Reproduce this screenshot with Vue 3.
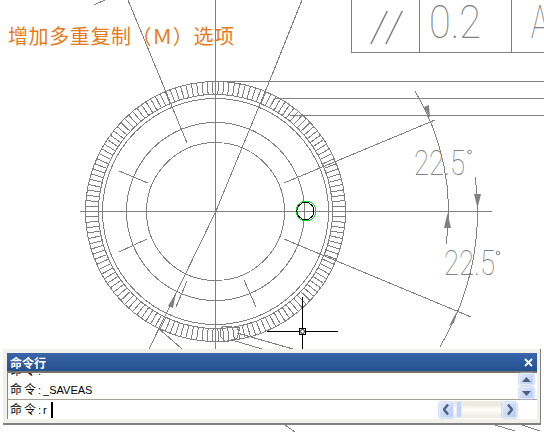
<template>
  <div class="screen">
    <!-- CAD drawing -->
    <svg class="drawing" width="544" height="432" viewBox="0 0 544 432">
      <g fill="none" stroke="#808080" stroke-width="1" shape-rendering="crispEdges">
        <circle v-for="r in rings" :key="r" :cx="cx" :cy="cy" :r="r" />
        <line v-for="(t, i) in teeth" :key="i" :x1="t.x1" :y1="t.y1" :x2="t.x2" :y2="t.y2" />
        <polyline v-for="(p, i) in polylines" :key="'p' + i" :points="p" />
        <path :d="arcInner" />
        <path :d="arcOuter" />
      </g>
      <g fill="#808080" stroke="none">
        <polygon v-for="(a, i) in arrows" :key="'a' + i" :points="a" />
      </g>

      <!-- dimension texts -->
      <g class="cad-text">
        <text transform="translate(369 41)" font-size="42" textLength="36" lengthAdjust="spacingAndGlyphs">//</text>
        <text transform="translate(429 38)" font-size="47" textLength="52" lengthAdjust="spacingAndGlyphs">0.2</text>
        <text transform="translate(531 38)" font-size="47" textLength="18" lengthAdjust="spacingAndGlyphs">A</text>
        <text transform="translate(414 175)" font-size="35" textLength="51" lengthAdjust="spacingAndGlyphs">22.5</text>
        <text transform="translate(444 275)" font-size="35" textLength="51" lengthAdjust="spacingAndGlyphs">22.5</text>
      </g>
      <g fill="none" stroke="#808080">
        <circle cx="469.5" cy="152" r="1.8" />
        <circle cx="498" cy="253" r="1.8" />
      </g>

      <!-- selected grip circle -->
      <g fill="none" shape-rendering="crispEdges">
        <circle cx="306" cy="211" r="10" stroke="#00e020" />
        <circle cx="305.5" cy="211" r="8.6" stroke="#000" />
      </g>

      <!-- crosshair -->
      <g stroke="#000" stroke-width="1" shape-rendering="crispEdges">
        <line x1="302.5" y1="297" x2="302.5" y2="349" />
        <line x1="267" y1="331.5" x2="338" y2="331.5" />
        <rect x="299.5" y="328.5" width="6" height="6" fill="#fff" />
      </g>
      <circle cx="302.5" cy="331.5" r="2" fill="none" stroke="#000" stroke-width="0.8" />
    </svg>

    <div class="headline">增加多重复制（Ｍ）选项</div>

    <!-- command line window -->
    <div class="cmd-window">
      <div class="cmd-title">
        <span>命令行</span>
        <svg class="close" width="9" height="9" viewBox="0 0 9 9">
          <path d="M1 1 L8 8 M8 1 L1 8" stroke="#fff" stroke-width="1.8" fill="none" />
        </svg>
      </div>
      <div class="cmd-history">
        <div class="history-text">
          <div class="line"><span class="prompt">命令</span><span class="colon">:</span></div>
          <div class="line"><span class="prompt">命令</span><span class="colon">:</span>_SAVEAS</div>
        </div>
        <div class="vscroll">
          <button class="sbtn vbtn">
            <svg width="9" height="5" viewBox="0 0 9 5"><path d="M4.5 0 L9 5 H0 Z" fill="#4d6185" /></svg>
          </button>
          <button class="sbtn vbtn">
            <svg width="9" height="5" viewBox="0 0 9 5"><path d="M0 0 H9 L4.5 5 Z" fill="#4d6185" /></svg>
          </button>
        </div>
      </div>
      <div class="cmd-input">
        <div class="line input-line"><span class="prompt">命令</span><span class="colon">:</span>r<span class="caret"></span></div>
        <div class="hscroll">
          <button class="sbtn hbtn">
            <svg width="7" height="11" viewBox="0 0 7 11"><path d="M5 0.5 L1 5.5 L5 10.5" stroke="#4d6185" stroke-width="2.4" fill="none" /></svg>
          </button>
          <div class="track">
            <div class="thumb"></div>
          </div>
          <button class="sbtn hbtn">
            <svg width="7" height="11" viewBox="0 0 7 11"><path d="M2 0.5 L6 5.5 L2 10.5" stroke="#4d6185" stroke-width="2.4" fill="none" /></svg>
          </button>
        </div>
      </div>
    </div>
  </div>
</template>

<script setup>
const cx = 215.5
const cy = 211.5
const rings = [130, 117, 113, 89, 69]

// hatch teeth around the outer ring
const teeth = []
for (let i = 0; i < 150; i++) {
  const a = (i * 2 * Math.PI) / 150
  teeth.push({
    x1: cx + 117 * Math.cos(a),
    y1: cy + 117 * Math.sin(a),
    x2: cx + 130 * Math.cos(a),
    y2: cy + 130 * Math.sin(a),
  })
}

const polylines = [
  '215.5,0 215.5,349',
  '80,211.5 492,211.5',
  // table
  '351.5,0 351.5,52.5 544,52.5',
  '419.5,0 419.5,52.5',
  '511.5,0 511.5,52.5',
  // extension lines
  '215,81.5 544,81.5',
  '275,98.5 544,98.5',
  '290,115.5 544,115.5',
  // radial lines
  '128,0 187,143',
  '302,0 272,75 216,211 149,349',
  '284,183 435,120',
  '284,239 471,317',
  '119,171 148,183',
  '119,252 147,239',
  '244,280 256,307',
  '187,281 176,307',
  '94,5 105,0',
  // lines at the bottom of the ring
  '157,327 182,349',
  '237,333 293,349',
  '232,340 262,349',
  '224,326 240,328 237,338 226,342 220,336 221,328 224,326',
  '285,425 295,432',
  '495,425 515,431',
  '522,425 540,431',
]

const arcPath = (r, a0, a1) => {
  const p = (a) => `${cx + r * Math.cos(a * Math.PI / 180)} ${cy + r * Math.sin(a * Math.PI / 180)}`
  return `M${p(a0)} A${r} ${r} 0 0 1 ${p(a1)}`
}
const arcInner = arcPath(233, -31, 8)
const arcOuter = arcPath(262, -7.5, 31)

const arrows = [
  '444,228 451,228 447.5,213',
  '474,194 481,194 477.5,208',
  '424,107 429,105 430,118',
  '449,326 454,323 457,311',
  '168,306 173,308 176,293',
]
</script>

<style scoped>
.screen {
  position: relative;
  width: 544px;
  height: 432px;
  overflow: hidden;
  background: #fff;
}

.drawing {
  display: block;
}

.cad-text text {
  font-family: Roboto, "Liberation Sans", sans-serif;
  font-weight: 100;
  fill: #808080;
}

.headline {
  position: absolute;
  left: 8px;
  top: 21px;
  font-family: "Noto Sans CJK SC", sans-serif;
  font-size: 20px;
  letter-spacing: 0.6px;
  line-height: 29px;
  color: #e87a1a;
  white-space: nowrap;
}

.cmd-window {
  position: absolute;
  left: 3px;
  top: 349px;
  width: 538px;
  height: 76px;
  box-sizing: border-box;
  padding: 4px 3px 5px 4px;
  display: flex;
  flex-direction: column;
  background: #f1f0ea;
  border-right: 1px solid #808080;
  border-bottom: 2px solid #808080;
  font-family: "Liberation Sans", "Noto Sans CJK SC", sans-serif;
  font-size: 11px;
  color: #000;
}

.cmd-title {
  height: 18px;
  flex: none;
  display: flex;
  align-items: center;
  justify-content: space-between;
  padding: 0 4px 0 3px;
  background: linear-gradient(#3a66aa, #24508f);
  color: #fff;
  font-family: "Noto Sans CJK SC", sans-serif;
  font-size: 12px;
  font-weight: 700;
}

.close {
  display: block;
}

.cmd-history {
  height: 29px;
  flex: none;
  display: flex;
  justify-content: space-between;
  background: #fff;
  border-top: 2px solid #77736a;
  border-left: 1px solid #8a8a80;
  box-sizing: border-box;
  border-bottom: 1px solid #a5a393;
}

.history-text {
  height: 26px;
  box-sizing: border-box;
  overflow: hidden;
  display: flex;
  flex-direction: column;
  justify-content: flex-end;
  padding: 0 0 1px 2px;
}

.history-text .line {
  flex: none;
  height: 19px;
  line-height: 19px;
}

.line {
  height: 15px;
  line-height: 15px;
  white-space: nowrap;
}

.prompt {
  font-family: "Noto Sans CJK SC", sans-serif;
  font-size: 12px;
  letter-spacing: 2px;
}

.colon {
  margin-right: 2px;
}

.vscroll {
  display: flex;
  flex-direction: column;
  gap: 2px;
  padding-right: 3px;
}

.sbtn {
  display: flex;
  align-items: center;
  justify-content: center;
  padding: 0;
  box-sizing: border-box;
  border: 1px solid #e4ebfb;
  border-radius: 2px;
  background: linear-gradient(135deg, #dfe8fc, #b8cbf4);
  box-shadow: 0 0 0 0.5px #aebfe4;
}

.vbtn {
  width: 15px;
  height: 12px;
}

.hbtn {
  width: 15px;
  height: 16px;
}

.cmd-input {
  height: 19px;
  flex: none;
  display: flex;
  justify-content: space-between;
  background: #fff;
  border-left: 1px solid #8a8a80;
}

.input-line {
  display: flex;
  align-items: baseline;
  padding-left: 2px;
  height: 19px;
  line-height: 18px;
}

.caret {
  width: 2px;
  height: 16px;
  margin-left: 4px;
  align-self: flex-start;
  margin-top: 2px;
  background: #000;
}

.hscroll {
  display: flex;
  align-items: center;
  width: 78px;
  margin-right: 20px;
}

.track {
  flex: 1;
  height: 17px;
  padding-left: 2px;
  background: linear-gradient(#ecebe2 0 4px, #fffef8 50%, #ecebe2);
}

.thumb {
  width: 6px;
  height: 17px;
  box-sizing: border-box;
  border: 1px solid #e4ebfb;
  border-radius: 2px;
  background: #c3d4f7;
}
</style>
